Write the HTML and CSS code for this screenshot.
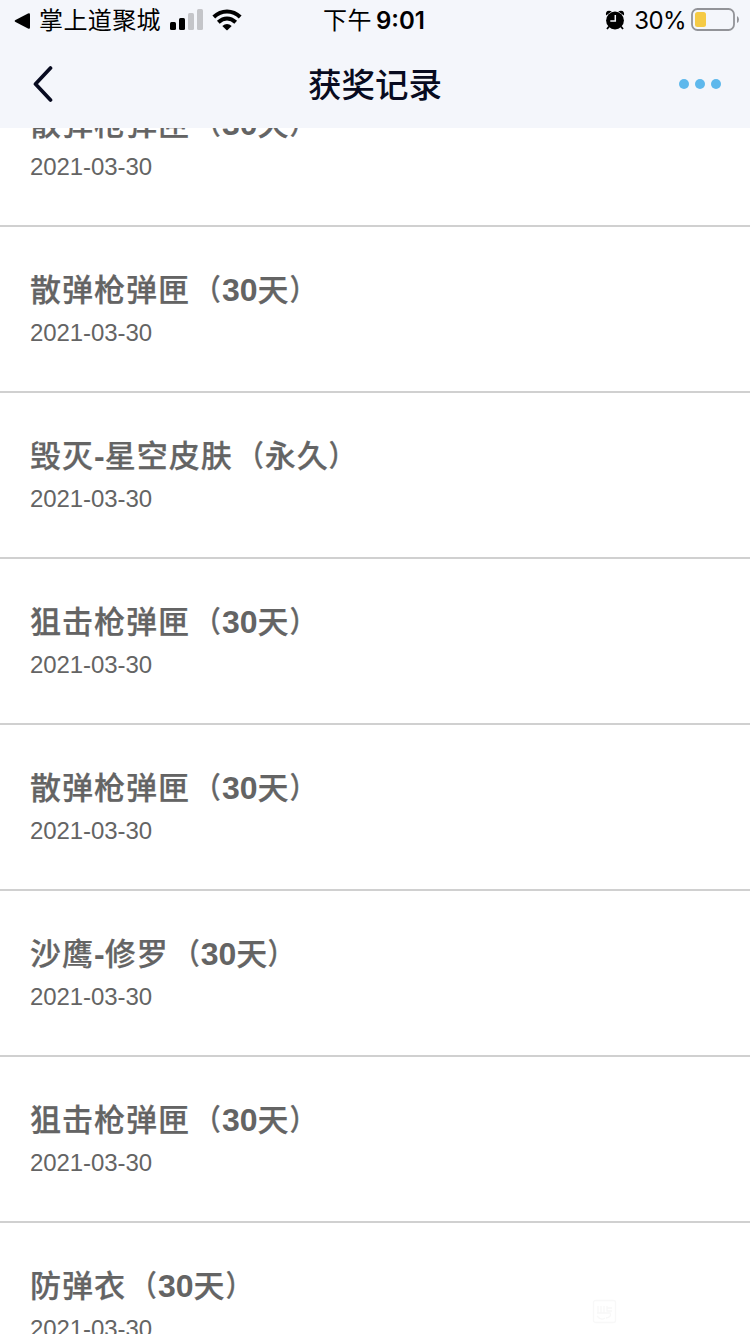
FILE: index.html
```html
<!DOCTYPE html>
<html lang="zh-CN">
<head>
<meta charset="utf-8">
<title>获奖记录</title>
<link rel="stylesheet" href="styles.css">
</head>
<body>
<div class="screen">
  <header class="header">
    <div class="status">
      <div class="status-left">
        <svg class="back-app" width="16" height="16" viewBox="0 0 16 16"><path d="M1.500 7 14 .5Q16 -.2 16 1.500V14.500Q16 16.200 14 15.500L1.500 9Q-.2 8 1.500 7Z"/></svg>
        <span class="app-name">掌上道聚城</span>
        <svg class="signal" width="34" height="22" viewBox="0 0 34 22"><rect x="0" y="13" width="6" height="8" rx="1.500"/><rect x="9" y="9" width="6" height="12" rx="1.500"/><g fill="#c4c5c9"><rect x="18" y="4" width="6" height="17" rx="1.500"/><rect x="27" y="0" width="6" height="21" rx="1.500"/></g></svg>
        <svg class="wifi" width="30" height="22" viewBox="0 0 30 22"><g fill="none" stroke="#000" stroke-width="4"><path d="M1.800 8Q7.500 2.500 15 2.500T28.200 8"/><path d="M6.300 13.300Q10.500 9.400 15 9.400T23.700 13.300"/></g><path d="M10.300 17Q15 13 19.700 17L15.600 21.100Q15 21.600 14.400 21.100Z"/></svg>
      </div>
      <div class="clock"><span class="period">下午</span><span class="time">9:01</span></div>
      <div class="status-right">
        <svg class="alarm" width="20" height="20" viewBox="0 0 20 20"><circle cx="10" cy="10.500" r="8.900"/><path d="M1 5.500Q.3 1 4 .8 5.600.8 6.700 1.500ZM19 5.500Q19.700 1 16 .8 14.400.8 13.300 1.500Z"/><path d="M4 16.500 2 19M16 16.500 18 19" stroke="#000" stroke-width="1.800"/><path d="M10.300 5V11H5.300" fill="none" stroke="#f4f6fb" stroke-width="1.500"/></svg>
        <span class="percent">30%</span>
        <svg class="battery" width="48" height="24" viewBox="0 0 48 24"><rect x="1" y="1" width="42" height="21" rx="5.500" fill="none" stroke="#929398" stroke-width="1.800"/><rect x="4" y="4" width="11" height="15" rx="2.500" fill="#f5ca45"/><path d="M46 8Q48 9 48 11.500T46 15Z" fill="#929398"/></svg>
      </div>
    </div>
    <nav class="nav">
      <svg class="back" width="20" height="36" viewBox="0 0 20 36"><path d="M17.500 2 2.500 18 17.500 34" fill="none" stroke="#080b20" stroke-width="3.700" stroke-linecap="round" stroke-linejoin="round"/></svg>
      <h1 class="nav-title">获奖记录</h1>
      <div class="more"><i></i><i></i><i></i></div>
    </nav>
  </header>
  <main class="viewport">
    <ul class="records">
      <li class="record"><h2>散弹枪弹匣<span class="open">（</span><b>30</b>天<span class="close">）</span></h2><time>2021-03-30</time></li>
      <li class="record"><h2>散弹枪弹匣<span class="open">（</span><b>30</b>天<span class="close">）</span></h2><time>2021-03-30</time></li>
      <li class="record"><h2>毁灭<b>-</b>星空皮肤<span class="open">（</span>永久<span class="close">）</span></h2><time>2021-03-30</time></li>
      <li class="record"><h2>狙击枪弹匣<span class="open">（</span><b>30</b>天<span class="close">）</span></h2><time>2021-03-30</time></li>
      <li class="record"><h2>散弹枪弹匣<span class="open">（</span><b>30</b>天<span class="close">）</span></h2><time>2021-03-30</time></li>
      <li class="record"><h2>沙鹰<b>-</b>修罗<span class="open">（</span><b>30</b>天<span class="close">）</span></h2><time>2021-03-30</time></li>
      <li class="record"><h2>狙击枪弹匣<span class="open">（</span><b>30</b>天<span class="close">）</span></h2><time>2021-03-30</time></li>
      <li class="record"><h2>防弹衣<span class="open">（</span><b>30</b>天<span class="close">）</span></h2><time>2021-03-30</time></li>
    </ul>
    <svg class="watermark" width="26" height="26" viewBox="0 0 26 26" fill="none" stroke="#f8f8f8" stroke-width="1.300"><rect x="1.500" y="1.500" width="22" height="22" rx="2"/><path d="M6 7V14M9 7V14M12 7V14M5 14H13M15 7V12H20M15 9H20M13 14H18Q20 18 14 19M5 17Q9 22 13 19"/></svg>
  </main>
</div>
</body>
</html>
```
FILE: styles.css
```css
* { box-sizing: border-box; }
body {
  margin: 0;
  background: #fff;
  font-family: "Liberation Sans", "Noto Sans CJK SC", sans-serif;
}
.screen {
  display: flex;
  flex-direction: column;
  width: 750px;
  height: 1334px;
  overflow: hidden;
}
.header {
  flex: none;
  height: 128px;
  background: #f4f6fb;
  color: #000;
}
.status {
  display: grid;
  grid-template-columns: 1fr auto 1fr;
  align-items: center;
  height: 40px;
  padding: 0 11px 0 14px;
  font-family: Inter, "Noto Sans CJK SC", sans-serif;
  font-size: 24px;
  line-height: 40px;
}
.status svg { flex: none; display: block; }
.status-left, .status-right, .clock { display: flex; align-items: center; }
.back-app { margin-right: 9px; }
.app-name { padding-top: 1px; letter-spacing: 0.4px; margin-right: 9px; }
.status .signal, .status .wifi { margin-bottom: 1px; }
.signal { margin-right: 8px; }
.clock { gap: 4px; padding-right: 5px; }
.period { padding-top: 1px; letter-spacing: 0.5px; }
.time { padding-top: 1px; font-weight: 600; }
.status-right { justify-content: flex-end; }
.status .alarm, .status .battery { margin-bottom: 1px; }
.alarm { margin-right: 9px; }
.percent { padding-top: 1px; letter-spacing: -0.6px; margin-right: 5px; }
.nav {
  display: grid;
  grid-template-columns: 1fr auto 1fr;
  align-items: center;
  height: 88px;
  padding: 0 29px 0 33px;
}
.nav-title {
  margin: 0;
  padding: 3px 4px 0 0;
  font-size: 33.500px;
  font-weight: 500;
  line-height: 50px;
  color: #080b20;
}
.more { display: flex; justify-content: flex-end; gap: 6px; }
.more i { width: 10px; height: 10px; border-radius: 50%; background: #5eb8ec; }
.viewport { position: relative; flex: 1; overflow: hidden; }
.records { margin: -67px 0 0; padding: 0; list-style: none; }
.record {
  height: 166px;
  padding: 40px 30px 0;
  border-bottom: 2px solid #d0d0d0;
  color: #646464;
}
.record h2 {
  height: 46px;
  margin: 0;
  font-size: 31px;
  font-weight: 500;
  line-height: 46px;
  letter-spacing: 1px;
  white-space: nowrap;
  -webkit-text-stroke: 0.25px #646464;
}
.record b { font-size: 32px; font-weight: 700; letter-spacing: 0; -webkit-text-stroke: 0; }
.open, .close {
  display: inline-block;
  width: 32px;
  font-size: 29px;
  line-height: 30px;
  letter-spacing: 0;
  vertical-align: 1px;
  transform: scaleX(0.85);
  -webkit-text-stroke: 0.6px #646464;
}
.open { padding-left: 1px; transform-origin: right; }
.close { transform-origin: left; }
.record time { display: block; font-size: 24px; line-height: 40px; letter-spacing: -0.08px; }
.watermark { position: absolute; right: 132px; bottom: 9px; }
```
